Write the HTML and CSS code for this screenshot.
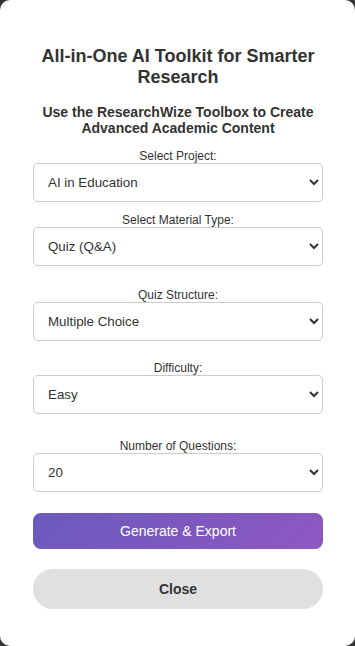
FILE: index.html
```html
<!DOCTYPE html>
<html lang="en">
<head>
<meta charset="utf-8">
<title>ResearchWize Toolbox</title>
<link rel="stylesheet" href="styles.css">
</head>
<body>
<div class="card">
  <h2 class="title">All-in-One AI Toolkit for Smarter Research</h2>
  <h3 class="subtitle">Use the ResearchWize Toolbox to Create Advanced Academic Content</h3>

  <div class="field field--first">
    <label class="field-label" for="project">Select Project:</label>
    <select class="field-select" id="project">
      <option>AI in Education</option>
    </select>
  </div>

  <div class="field field--tight">
    <label class="field-label" for="material">Select Material Type:</label>
    <select class="field-select" id="material">
      <option>Quiz (Q&amp;A)</option>
    </select>
  </div>

  <div class="field field--section">
    <label class="field-label" for="structure">Quiz Structure:</label>
    <select class="field-select" id="structure">
      <option>Multiple Choice</option>
    </select>
  </div>

  <div class="field field--section-b">
    <label class="field-label" for="difficulty">Difficulty:</label>
    <select class="field-select" id="difficulty">
      <option>Easy</option>
    </select>
  </div>

  <div class="field field--section-c">
    <label class="field-label" for="count">Number of Questions:</label>
    <select class="field-select" id="count">
      <option>20</option>
    </select>
  </div>

  <button class="btn-generate" type="button">Generate &amp; Export</button>
  <button class="btn-close" type="button">Close</button>
</div>
</body>
</html>
```
FILE: styles.css
```css
html, body {
  margin: 0;
  padding: 0;
  height: 100%;
}

body {
  background: #333333;
  font-family: "Liberation Sans", Arial, sans-serif;
  color: #333333;
}

.card {
  box-sizing: border-box;
  height: 100vh;
  background: #ffffff;
  border-radius: 10px;
  padding: 46px 32px 0 33px;
  display: flex;
  flex-direction: column;
}

.title {
  margin: 0;
  font-size: 18px;
  font-weight: bold;
  text-align: center;
  color: #333333;
}

.subtitle {
  margin: 16px 0 0;
  font-size: 14px;
  font-weight: bold;
  text-align: center;
  color: #333333;
}

.field {
  display: flex;
  flex-direction: column;
}

.field--first { margin-top: 13px; }
.field--tight { margin-top: 11px; }
.field--section { margin-top: 22px; }
.field--section-b { margin-top: 20px; }
.field--section-c { margin-top: 25px; }

.field-label {
  display: block;
  font-size: 12px;
  line-height: 14px;
  text-align: center;
  color: #333333;
}

.field-select {
  box-sizing: border-box;
  width: 100%;
  height: 39px;
  padding: 0 10px;
  border: 1px solid #cccccc;
  border-radius: 5px;
  background-color: #ffffff;
  font-family: "Liberation Sans", Arial, sans-serif;
  font-size: 13.333px;
  color: #333333;
}

.btn-generate {
  margin-top: 21px;
  height: 36px;
  border: none;
  border-radius: 8px;
  background: linear-gradient(135deg, #6a5abd 0%, #8f57c1 100%);
  color: #ffffff;
  font-family: "Liberation Sans", Arial, sans-serif;
  font-size: 14px;
}

.btn-close {
  margin-top: 20px;
  height: 40px;
  border: none;
  border-radius: 20px;
  background: #e0e0e0;
  color: #333333;
  font-family: "Liberation Sans", Arial, sans-serif;
  font-size: 14px;
  font-weight: bold;
}
```
